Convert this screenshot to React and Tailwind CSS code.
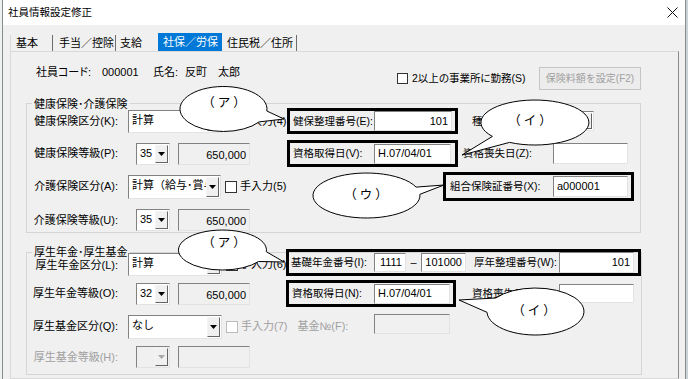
import React from "react";

const FONT = "[font-family:'Liberation_Sans','Noto_Sans_CJK_JP',sans-serif]";

function Check({ disabled }) {
  return (
    <div
      className={`h-[12px] w-[12px] shrink-0 border bg-white ${
        disabled ? "border-[#bcbcbc]" : "border-[#333333]"
      }`}
    />
  );
}

function Arrow({ disabled }) {
  return (
    <div className="flex h-full w-[13px] shrink-0 items-center justify-center border border-b-[#646464] border-l-[#f4f4f4] border-r-[#646464] border-t-[#f4f4f4] bg-[#f0f0f0]">
      <svg width="7" height="4" viewBox="0 0 7 4">
        <path d="M0 0h7L3.5 4z" fill={disabled ? "#a8a8a8" : "#000"} />
      </svg>
    </div>
  );
}

function Combo({ className = "", text, disabled }) {
  return (
    <div
      className={`flex shrink-0 border border-[#828282] border-b-[#e3e3e3] border-r-[#e3e3e3] p-[1px] ${
        disabled ? "bg-[#f0f0f0]" : "bg-white"
      } ${className}`}
    >
      <div className="flex-1 overflow-hidden whitespace-nowrap pl-[2px] pt-[1px] leading-[14px]">
        {text}
      </div>
      <Arrow disabled={disabled} />
    </div>
  );
}

function Field({ className = "", children, right, disabled }) {
  return (
    <div
      className={`flex shrink-0 items-center whitespace-nowrap border border-[#828282] border-b-[#e3e3e3] border-r-[#e3e3e3] px-[3px] leading-[13px] ${
        right ? "justify-end" : ""
      } ${disabled ? "bg-[#f0f0f0]" : "bg-white"} ${className}`}
    >
      {children}
    </div>
  );
}

function Label({ children, gray, className = "" }) {
  return (
    <div
      className={`w-[91px] shrink-0 whitespace-nowrap text-right leading-[13px] ${
        gray ? "text-[#a0a0a0]" : ""
      } ${className}`}
    >
      {children}
    </div>
  );
}

function BoxLabel({ children, className = "" }) {
  return (
    <span className={`shrink-0 whitespace-nowrap text-[10.5px] leading-[13px] ${className}`}>
      {children}
    </span>
  );
}

function GradeRow({ label, grade, amount, disabled, className = "" }) {
  return (
    <div className={`flex h-[22px] items-center ${className}`}>
      <Label gray={disabled}>{label}</Label>
      <Combo className="ml-[18px] h-[22px] w-[34px]" text={grade} disabled={disabled} />
      <Field className="ml-[8px] h-[22px] w-[72px] !items-end pb-[2px]" right disabled>
        {amount}
      </Field>
    </div>
  );
}

function calloutPath(cx, cy, rx, ry, a1, a2, tx, ty) {
  const p = (a) => {
    const r = (a * Math.PI) / 180;
    return `${(cx + rx * Math.cos(r)).toFixed(1)} ${(cy + ry * Math.sin(r)).toFixed(1)}`;
  };
  return `M${p(a2)} A${rx} ${ry} 0 1 1 ${p(a1)} L${tx} ${ty} Z`;
}

const callouts = [
  { cx: 223.5, cy: 109, rx: 43.5, ry: 22.5, a1: 5, a2: 35, tx: 284, ty: 119, label: "（ア）", lx: 224, ly: 103 },
  { cx: 535, cy: 122.5, rx: 54, ry: 22.5, a1: 118, a2: 142, tx: 462, ty: 155, label: "（イ）", lx: 530, ly: 121 },
  { cx: 366.5, cy: 195.5, rx: 53.5, ry: 22.5, a1: -22, a2: -3, tx: 444, ty: 185, label: "（ウ）", lx: 366, ly: 195 },
  { cx: 222.5, cy: 250, rx: 44, ry: 20, a1: 5, a2: 35, tx: 284, ty: 262, label: "（ア）", lx: 224, ly: 243 },
  { cx: 535.5, cy: 311.5, rx: 48.5, ry: 23.5, a1: 178, a2: 215, tx: 459, ty: 300, label: "（イ）", lx: 534, ly: 311 },
];

export default function App() {
  const tabs = [
    { name: "基本", w: "w-[43px] pl-[5px] border-l border-l-[#d9d9d9] border-r border-r-[#6d6d6d]" },
    { name: "手当／控除", w: "w-[63px] pl-[6px] border-r border-r-[#6d6d6d]" },
    { name: "支給", w: "w-[42px] pl-[4px]" },
    { name: "社保／労保", w: "w-[64px] pl-[5px]", active: true },
    { name: "住民税／住所", w: "w-[75px] pl-[5px] border-r border-r-[#6d6d6d]" },
  ];

  return (
    <div className={`relative flex h-[379px] w-[688px] overflow-hidden bg-[#dfe5e8] text-[11px] text-black ${FONT}`}>
      <div className="w-[2px] shrink-0 bg-[#eef1f2]" />
      <div className="flex w-[684px] shrink-0 flex-col border-x border-[#8c8c8c] bg-[#f0f0f0]">
        {/* title bar */}
        <div className="flex h-[25px] shrink-0 items-center justify-between bg-white pl-[5px] pr-[7px]">
          <span className="text-[10.5px] leading-[13px]">社員情報設定修正</span>
          <svg width="11" height="11" viewBox="0 0 11 11">
            <path d="M0.5 0.5L10.5 10.5M10.5 0.5L0.5 10.5" stroke="#111" strokeWidth="1" />
          </svg>
        </div>

        {/* tabs */}
        <div className="mt-[8px] flex h-[18px] items-end pl-[7px]">
          {tabs.map((t) => (
            <div
              key={t.name}
              className={`flex shrink-0 items-center whitespace-nowrap leading-[13px] ${t.w} ${
                t.active ? "h-[18px] bg-[#0078d7] text-white" : "h-[16px]"
              }`}
            >
              {t.name}
            </div>
          ))}
        </div>

        {/* tab panel */}
        <div className="ml-[7px] flex w-[669px] flex-1 flex-col border border-[#d9d9d9] border-r-[#8a8a8a]">
          {/* header row */}
          <div className="mt-[14px] flex h-[24px] items-start pl-[25px]">
            <span className="w-[66px] shrink-0 whitespace-nowrap leading-[13px] [font-feature-settings:'palt']">社員コード:</span>
            <span className="w-[51px] shrink-0 leading-[13px]">000001</span>
            <span className="w-[32px] shrink-0 leading-[13px]">氏名:</span>
            <span className="w-[212px] shrink-0 leading-[13px]">反町　太郎</span>
            <div className="flex h-[24px] w-[142px] shrink-0 items-center">
              <div className="mt-[1px] h-[11px] w-[11px] border border-[#333333] bg-white" />
              <span className="ml-[4px] whitespace-nowrap text-[10.5px] leading-[13px] [font-feature-settings:'palt']">2以上の事業所に勤務(S)</span>
            </div>
            <div className="mt-[1px] flex h-[23px] w-[102px] shrink-0 items-center justify-center border border-[#c5c5c5] bg-[#ececec] text-[10px] text-[#a0a0a0]">
              保険料額を設定(F2)
            </div>
          </div>

          {/* 健康保険・介護保険 */}
          <fieldset className="ml-[15px] mt-[6px] w-[615px] border border-[#d5d5d5] pb-[1px]">
            <legend className="relative top-[1px] ml-[5px] px-[2px] leading-[14px]">健康保険･介護保険</legend>

            <div className="-mt-[2px] flex h-[26px] items-center">
              <Label>健康保険区分(K):</Label>
              <Combo className="ml-[10px] h-[23px] w-[94px]" text="計算" />
              <div className="flex w-[65px] shrink-0 items-center pl-[4px]">
                <Check />
                <span className="ml-[2px] whitespace-nowrap leading-[13px]">手入力(4)</span>
              </div>
              <div className="flex h-[26px] w-[171px] shrink-0 items-center border-[3px] border-black pl-[3px]">
                <BoxLabel className="w-[81px]">健保整理番号(E):</BoxLabel>
                <Field className="h-[20px] w-[78px]" right>101</Field>
              </div>
              <BoxLabel className="ml-[14px] w-[58px]">種別(B):</BoxLabel>
              <Combo className="h-[20px] w-[64px]" text="" />
            </div>

            <div className="mt-[6px] flex h-[27px] items-center">
              <GradeRow label="健康保険等級(P):" grade="35" amount="650,000" />
              <div className="ml-[37px] flex h-[27px] w-[171px] shrink-0 items-center border-[3px] border-black pl-[3px]">
                <BoxLabel className="w-[81px]">資格取得日(V):</BoxLabel>
                <Field className="h-[20px] w-[77px]">H.07/04/01</Field>
              </div>
              <BoxLabel className="ml-[5px] w-[90px]">資格喪失日(Z):</BoxLabel>
              <Field className="h-[21px] w-[75px]" />
            </div>

            <div className="mt-[5px] flex h-[29px] items-center">
              <Label>介護保険区分(A):</Label>
              <Combo className="ml-[10px] h-[24px] w-[93px]" text="計算（給与･賞与）" />
              <div className="flex w-[222px] shrink-0 items-center pl-[4px]">
                <Check />
                <span className="ml-[3px] whitespace-nowrap leading-[13px]">手入力(5)</span>
              </div>
              <div className="flex h-[29px] w-[191px] shrink-0 items-center border-[3px] border-black pl-[4px]">
                <BoxLabel className="w-[103px]">組合保険証番号(X):</BoxLabel>
                <Field className="h-[21px] w-[75px]">a000001</Field>
              </div>
            </div>

            <GradeRow className="mt-[8px]" label="介護保険等級(U):" grade="35" amount="650,000" />
          </fieldset>

          {/* 厚生年金・厚生基金 */}
          <fieldset className="ml-[15px] mt-[12px] w-[615px] border border-[#d5d5d5] pb-[6px]">
            <legend className="ml-[5px] px-[2px] leading-[14px]">厚生年金･厚生基金</legend>

            <div className="-mt-[10px] flex h-[27px] items-end">
              <Label className="mb-[4px]">厚生年金区分(L):</Label>
              <Combo className="ml-[10px] h-[23px] w-[94px]" text="計算" />
              <div className="mb-[5px] flex w-[64px] shrink-0 items-center pl-[4px]">
                <Check />
                <span className="ml-[2px] whitespace-nowrap leading-[13px]">手入力(6)</span>
              </div>
              <div className="flex h-[27px] w-[355px] shrink-0 items-center border-[3px] border-black pl-[2px]">
                <BoxLabel className="w-[83px]">基礎年金番号(I):</BoxLabel>
                <Field className="h-[19px] w-[32px]" right>1111</Field>
                <span className="w-[15px] shrink-0 text-center leading-[13px]">–</span>
                <Field className="h-[19px] w-[45px]" right>101000</Field>
                <BoxLabel className="ml-[8px] w-[85px]">厚年整理番号(W):</BoxLabel>
                <Field className="h-[21px] w-[75px]" right>101</Field>
              </div>
            </div>

            <div className="mt-[4px] flex h-[27px] items-center">
              <GradeRow label="厚生年金等級(O):" grade="32" amount="650,000" />
              <div className="ml-[36px] flex h-[27px] w-[170px] shrink-0 items-center border-[3px] border-black pl-[3px]">
                <BoxLabel className="w-[82px]">資格取得日(N):</BoxLabel>
                <Field className="h-[20px] w-[76px]">H.07/04/01</Field>
              </div>
              <BoxLabel className="ml-[16px] w-[87px]">資格喪失日(Z):</BoxLabel>
              <Field className="h-[19px] w-[75px]" />
            </div>

            <div className="mt-[7px] flex h-[25px] items-center">
              <Label>厚生基金区分(Q):</Label>
              <Combo className="ml-[10px] h-[24px] w-[94px]" text="なし" />
              <div className="flex w-[152px] shrink-0 items-center pl-[4px] text-[#a0a0a0]">
                <Check disabled />
                <span className="ml-[3px] whitespace-nowrap leading-[13px]">手入力(7)</span>
                <span className="ml-[10px] whitespace-nowrap leading-[13px]">基金№(F):</span>
              </div>
              <Field className="h-[20px] w-[76px] self-start" disabled />
            </div>

            <GradeRow className="mt-[7px]" label="厚生基金等級(H):" grade="" amount="" disabled />
          </fieldset>
        </div>
      </div>
      <div className="w-[2px] shrink-0 bg-[#c9d3d8]" />

      {/* callouts */}
      <div className="pointer-events-none absolute inset-0">
        <svg width="688" height="379" className="absolute left-0 top-0">
          {callouts.map((c, i) => (
            <path
              key={i}
              d={calloutPath(c.cx, c.cy, c.rx, c.ry, c.a1, c.a2, c.tx, c.ty)}
              fill="#fff"
              stroke="#000"
              strokeWidth="1"
            />
          ))}
        </svg>
        {callouts.map((c, i) => (
          <span
            key={i}
            className="absolute -translate-x-1/2 -translate-y-1/2 whitespace-nowrap pl-[3px] text-[12.5px] leading-[15px] tracking-[3px]"
            style={{ left: c.lx, top: c.ly }}
          >
            {c.label}
          </span>
        ))}
      </div>
    </div>
  );
}
